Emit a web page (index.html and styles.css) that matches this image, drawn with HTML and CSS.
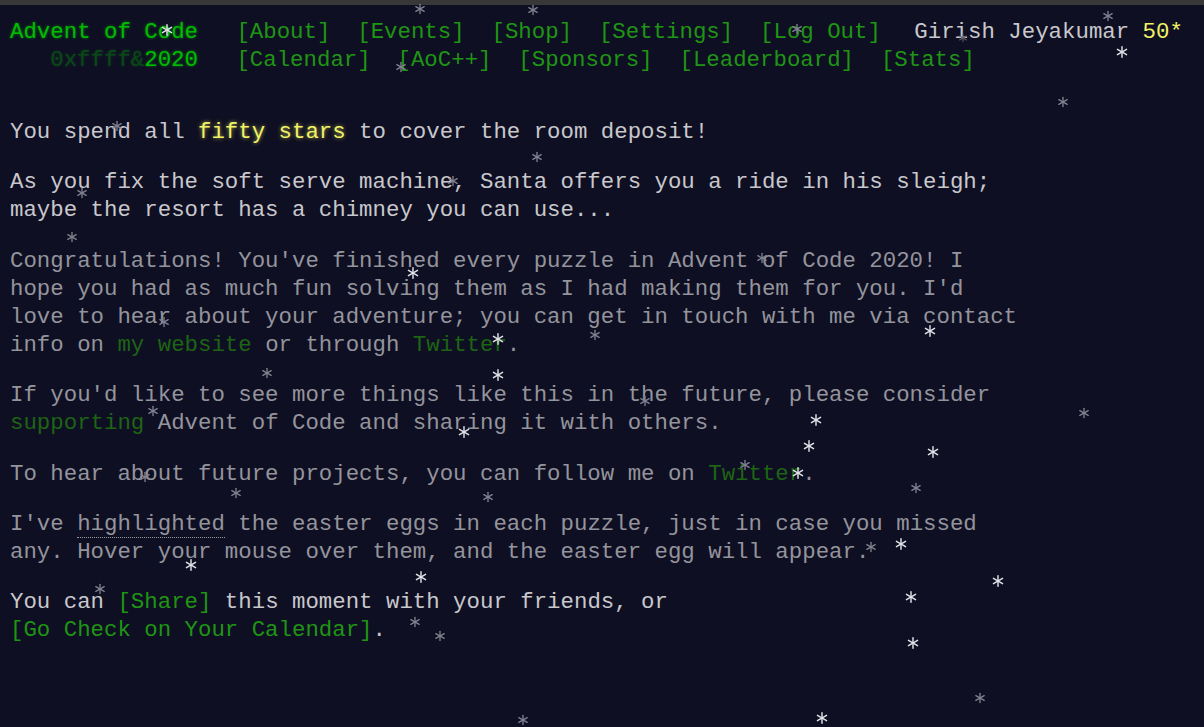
FILE: index.html
```html
<!DOCTYPE html>
<html lang="en">
<head>
<meta charset="utf-8">
<title>Advent of Code 2020</title>
<link rel="stylesheet" href="styles.css">
</head>
<body>
<div class="topbar"></div>
<div class="page">
  <header class="header">
    <div class="hrow">
      <h1 class="title"><a class="title-link" href="#">Advent of Code</a></h1>
      <nav><ul class="nav">
        <li><a href="#">[About]</a></li><li><a href="#">[Events]</a></li><li><a href="#">[Shop]</a></li><li><a href="#">[Settings]</a></li><li><a href="#">[Log Out]</a></li>
      </ul></nav>
      <div class="user">Girish Jeyakumar <span class="star-count">50*</span></div>
    </div>
    <div class="hrow">
      <h1 class="title"><a class="title-link" href="#"><span class="event-wrap">0xffff&amp;</span>2020</a></h1>
      <nav><ul class="nav">
        <li><a href="#">[Calendar]</a></li><li><a href="#">[AoC++]</a></li><li><a href="#">[Sponsors]</a></li><li><a href="#">[Leaderboard]</a></li><li><a href="#">[Stats]</a></li>
      </ul></nav>
    </div>
  </header>
  <main class="main">
    <article class="article">
      <p>You spend all <em class="star">fifty stars</em> to cover the room deposit!</p>
      <p>As you fix the soft serve machine, Santa offers you a ride in his sleigh; maybe the resort has a chimney you can use...</p>
      <p class="quiet">Congratulations! You've finished every puzzle in Advent of Code 2020! I hope you had as much fun solving them as I had making them for you. I'd love to hear about your adventure; you can get in touch with me via contact info on <a href="#">my website</a> or through <a href="#">Twitter</a>.</p>
      <p class="quiet">If you'd like to see more things like this in the future, please consider <a href="#">supporting</a> Advent of Code and sharing it with others.</p>
      <p class="quiet">To hear about future projects, you can follow me on <a href="#">Twitter</a>.</p>
      <p class="quiet">I've <span class="egg">highlighted</span> the easter eggs in each puzzle, just in case you missed any. Hover your mouse over them, and the easter egg will appear.</p>
      <p>You can <a href="#">[Share]</a> this moment with your friends, or <span class="nowrap"><a href="#">[Go Check on Your Calendar]</a>.</span></p>
    </article>
  </main>
</div>
<svg class="defs" width="0" height="0" aria-hidden="true">
  <symbol id="star" viewBox="-5 -5 10 10">
    <g stroke="currentColor" stroke-width="1.2" stroke-linecap="round">
      <line x1="0" y1="-4.4" x2="0" y2="4.4"/>
      <line x1="-3.8" y1="-2.2" x2="3.8" y2="2.2"/>
      <line x1="-3.8" y1="2.2" x2="3.8" y2="-2.2"/>
    </g>
  </symbol>
</svg>
<div class="snow" aria-hidden="true">
  <svg class="flake dim" style="left:420px;top:9px"><use href="#star"/></svg>
  <svg class="flake dim" style="left:533px;top:10px"><use href="#star"/></svg>
  <svg class="flake dim" style="left:1108px;top:16px"><use href="#star"/></svg>
  <svg class="flake dim" style="left:797px;top:29px"><use href="#star"/></svg>
  <svg class="flake bright" style="left:167px;top:30px"><use href="#star"/></svg>
  <svg class="flake faint" style="left:963px;top:38px"><use href="#star"/></svg>
  <svg class="flake bright" style="left:1122px;top:52px"><use href="#star"/></svg>
  <svg class="flake dim" style="left:401px;top:67px"><use href="#star"/></svg>
  <svg class="flake dim" style="left:1063px;top:102px"><use href="#star"/></svg>
  <svg class="flake dim" style="left:117px;top:126px"><use href="#star"/></svg>
  <svg class="flake dim" style="left:537px;top:157px"><use href="#star"/></svg>
  <svg class="flake dim" style="left:453px;top:181px"><use href="#star"/></svg>
  <svg class="flake dim" style="left:82px;top:193px"><use href="#star"/></svg>
  <svg class="flake dim" style="left:72px;top:237px"><use href="#star"/></svg>
  <svg class="flake dim" style="left:762px;top:258px"><use href="#star"/></svg>
  <svg class="flake bright" style="left:413px;top:273px"><use href="#star"/></svg>
  <svg class="flake dim" style="left:164px;top:322px"><use href="#star"/></svg>
  <svg class="flake bright" style="left:930px;top:331px"><use href="#star"/></svg>
  <svg class="flake dim" style="left:595px;top:335px"><use href="#star"/></svg>
  <svg class="flake bright" style="left:498px;top:339px"><use href="#star"/></svg>
  <svg class="flake dim" style="left:267px;top:373px"><use href="#star"/></svg>
  <svg class="flake bright" style="left:498px;top:375px"><use href="#star"/></svg>
  <svg class="flake dim" style="left:645px;top:401px"><use href="#star"/></svg>
  <svg class="flake dim" style="left:153px;top:411px"><use href="#star"/></svg>
  <svg class="flake dim" style="left:1084px;top:413px"><use href="#star"/></svg>
  <svg class="flake bright" style="left:816px;top:420px"><use href="#star"/></svg>
  <svg class="flake bright" style="left:464px;top:432px"><use href="#star"/></svg>
  <svg class="flake bright" style="left:809px;top:446px"><use href="#star"/></svg>
  <svg class="flake bright" style="left:933px;top:452px"><use href="#star"/></svg>
  <svg class="flake dim" style="left:745px;top:465px"><use href="#star"/></svg>
  <svg class="flake bright" style="left:798px;top:473px"><use href="#star"/></svg>
  <svg class="flake dim" style="left:145px;top:477px"><use href="#star"/></svg>
  <svg class="flake dim" style="left:916px;top:488px"><use href="#star"/></svg>
  <svg class="flake dim" style="left:236px;top:493px"><use href="#star"/></svg>
  <svg class="flake dim" style="left:488px;top:497px"><use href="#star"/></svg>
  <svg class="flake dim" style="left:871px;top:547px"><use href="#star"/></svg>
  <svg class="flake bright" style="left:901px;top:544px"><use href="#star"/></svg>
  <svg class="flake bright" style="left:191px;top:565px"><use href="#star"/></svg>
  <svg class="flake bright" style="left:421px;top:577px"><use href="#star"/></svg>
  <svg class="flake bright" style="left:998px;top:581px"><use href="#star"/></svg>
  <svg class="flake dim" style="left:100px;top:589px"><use href="#star"/></svg>
  <svg class="flake bright" style="left:911px;top:597px"><use href="#star"/></svg>
  <svg class="flake dim" style="left:415px;top:622px"><use href="#star"/></svg>
  <svg class="flake dim" style="left:440px;top:636px"><use href="#star"/></svg>
  <svg class="flake bright" style="left:913px;top:643px"><use href="#star"/></svg>
  <svg class="flake dim" style="left:980px;top:698px"><use href="#star"/></svg>
  <svg class="flake bright" style="left:822px;top:718px"><use href="#star"/></svg>
  <svg class="flake dim" style="left:523px;top:720px"><use href="#star"/></svg>
</div>
</body>
</html>
```
FILE: styles.css
```css
html, body {
  margin: 0;
  padding: 0;
}
body {
  background: #0f0f23;
  color: #c8c8cc;
  font-family: "Liberation Mono", "DejaVu Sans Mono", monospace;
  font-size: 22.38px;
  line-height: 28px;
  min-height: 727px;
  overflow: hidden;
  position: relative;
}
a {
  color: #1f9514;
  text-decoration: none;
}
.topbar {
  height: 5px;
  background: #383838;
}
.page {
  padding: 13px 0 0 10px;
}
.header {
  display: flex;
  flex-direction: column;
}
.hrow {
  display: flex;
  align-items: baseline;
  white-space: nowrap;
}
.title {
  margin: 0 25px 0 0;
  width: 14ch;
  text-align: right;
  font-size: inherit;
  font-weight: normal;
  line-height: 28px;
}
.title-link {
  color: #00bb00;
  text-shadow: 0 0 3px rgba(0, 204, 0, 0.6);
}
.event-wrap {
  opacity: 0.33;
}
.nav {
  display: flex;
  margin: 0;
  padding: 0;
  list-style: none;
}
.nav li {
  padding: 0 0.6em;
}
.user {
  margin-left: 20px;
  color: #c8c8cc;
}
.star-count {
  color: #f2f266;
}
.main {
  margin-top: 44px;
}
.article {
  width: 75.5ch;
}
.article p {
  margin: 0 0 22.4px 0;
}
.star {
  font-style: normal;
  color: #f2f266;
  text-shadow: 0 0 4px rgba(255, 255, 102, 0.6);
}
.quiet {
  color: #94949c;
}
.quiet a {
  color: #1d6414;
}
.egg {
  border-bottom: 1px dotted #9a9aa0;
}
.nowrap {
  white-space: nowrap;
}
.defs {
  position: absolute;
}
.snow {
  position: absolute;
  inset: 0;
  pointer-events: none;
}
.flake {
  position: absolute;
  width: 11px;
  height: 11px;
  transform: translate(-50%, -50%);
}
.flake.bright {
  width: 12px;
  height: 12px;
  color: #e2e2ea;
}
.flake.dim {
  color: #80808f;
}
.flake.faint {
  width: 9px;
  height: 9px;
  color: #5c5c6a;
}
```
